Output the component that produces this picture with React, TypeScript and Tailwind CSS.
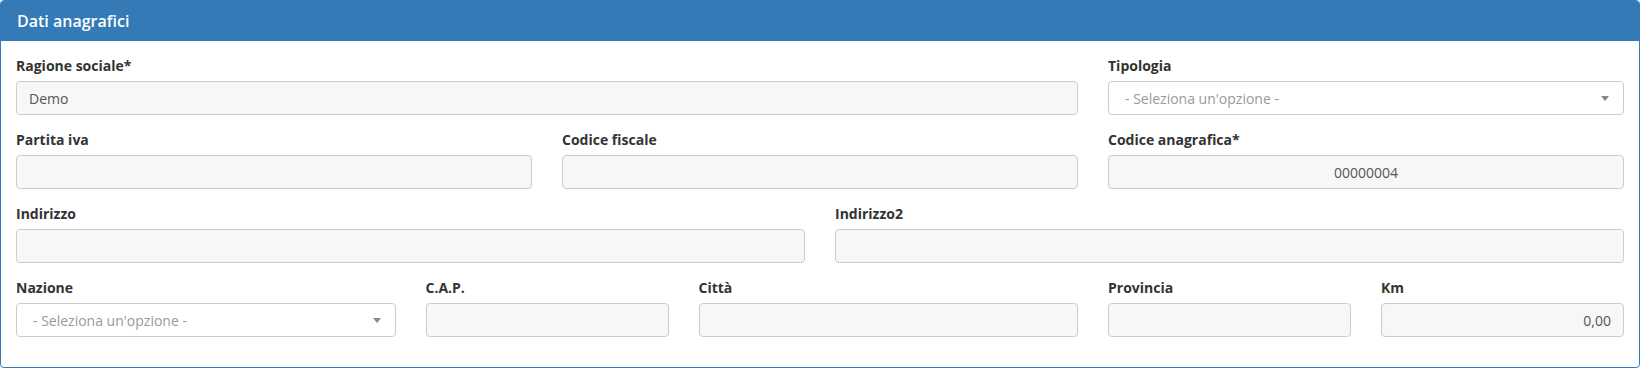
import React from 'react';

type Field = {
  label: string;
  span: string;
  value?: string;
  align?: 'left' | 'center' | 'right';
  select?: boolean;
};

const rows: Field[][] = [
  [
    { label: 'Ragione sociale*', span: 'col-span-8', value: 'Demo' },
    { label: 'Tipologia', span: 'col-span-4', select: true },
  ],
  [
    { label: 'Partita iva', span: 'col-span-4' },
    { label: 'Codice fiscale', span: 'col-span-4' },
    { label: 'Codice anagrafica*', span: 'col-span-4', value: '00000004', align: 'center' },
  ],
  [
    { label: 'Indirizzo', span: 'col-span-6' },
    { label: 'Indirizzo2', span: 'col-span-6' },
  ],
  [
    { label: 'Nazione', span: 'col-span-3', select: true },
    { label: 'C.A.P.', span: 'col-span-2' },
    { label: 'Città', span: 'col-span-3' },
    { label: 'Provincia', span: 'col-span-2' },
    { label: 'Km', span: 'col-span-2', value: '0,00', align: 'right' },
  ],
];

function FormField({ field }: { field: Field }) {
  const alignCls =
    field.align === 'center' ? 'justify-center' : field.align === 'right' ? 'justify-end' : 'justify-start';

  return (
    <div className={`${field.span} mb-[15px]`}>
      <div className="text-[14px] leading-[20px] font-bold text-[#333] mb-[5px]">{field.label}</div>
      {field.select ? (
        // select2 a tendina, sfondo bianco
        <div className="h-[34px] rounded-[4px] border border-[#ccc] bg-white flex items-center pl-[16px] pr-[14px]">
          <span className="flex-1 text-[14px] text-[#999]">- Seleziona un'opzione -</span>
          <span className="w-0 h-0 border-t-[5px] border-x-[4px] border-t-[#888] border-x-transparent" />
        </div>
      ) : (
        <div className={`h-[34px] rounded-[4px] border border-[#ccc] bg-[#f7f7f7] flex items-center px-[12px] ${alignCls}`}>
          <span className="text-[14px] text-[#555]">{field.value ?? ''}</span>
        </div>
      )}
    </div>
  );
}

export default function App() {
  return (
    <div className="bg-white" style={{ fontFamily: '"Open Sans", "Liberation Sans", sans-serif' }}>
      <div className="w-[1640px] border border-[#337ab7] rounded-[4px] bg-white overflow-hidden">
        {/* intestazione del pannello */}
        <div className="h-[40px] bg-[#337ab7] text-white px-[16px] flex items-center text-[16px] font-semibold">
          Dati anagrafici
        </div>

        <div className="px-[15px] pt-[15px] pb-[15px]">
          {rows.map((row, i) => (
            <div key={i} className="grid grid-cols-12 gap-x-[30px]">
              {row.map((f) => (
                <FormField key={f.label} field={f} />
              ))}
            </div>
          ))}
        </div>
      </div>
    </div>
  );
}
